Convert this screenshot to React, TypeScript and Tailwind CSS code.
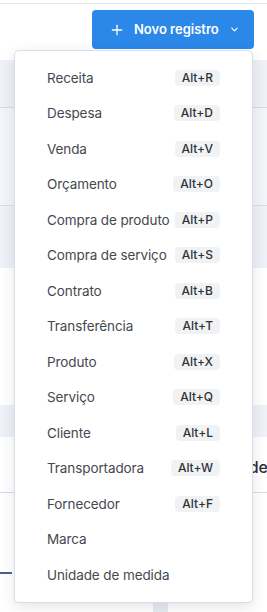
import { ChevronDown, Plus } from "lucide-react";

const shortcuts: { label: string; keys?: string }[] = [
  { label: "Receita", keys: "Alt+R" },
  { label: "Despesa", keys: "Alt+D" },
  { label: "Venda", keys: "Alt+V" },
  { label: "Orçamento", keys: "Alt+O" },
  { label: "Compra de produto", keys: "Alt+P" },
  { label: "Compra de serviço", keys: "Alt+S" },
  { label: "Contrato", keys: "Alt+B" },
  { label: "Transferência", keys: "Alt+T" },
  { label: "Produto", keys: "Alt+X" },
  { label: "Serviço", keys: "Alt+Q" },
  { label: "Cliente", keys: "Alt+L" },
  { label: "Transportadora", keys: "Alt+W" },
  { label: "Fornecedor", keys: "Alt+F" },
  { label: "Marca" },
  { label: "Unidade de medida" },
];

function NewRecordMenu() {
  return (
    <div className="absolute left-[14px] top-[50px] w-[239px] rounded-[5px] border border-[#d9dee6] bg-white py-[9px] shadow-[0_4px_14px_rgba(30,45,70,0.12)]">
      <ul>
        {shortcuts.map(({ label, keys }) => (
          <li
            key={label}
            className="flex h-[35.5px] items-center justify-between gap-1 px-8"
          >
            <span className="whitespace-nowrap text-[13.5px] tracking-[-0.1px] text-[#45494f]">
              {label}
            </span>
            {keys && (
              <kbd className="rounded-[4px] bg-[#f1f2f4] px-[7px] py-[1px] font-[Inter,sans-serif] text-[12px] font-medium leading-[14px] text-[#2f3237]">
                {keys}
              </kbd>
            )}
          </li>
        ))}
      </ul>
    </div>
  );
}

export default function App() {
  return (
    <div className="relative h-[612px] w-[267px] overflow-hidden bg-white font-[Inter,sans-serif]">
      <div className="h-[3px]" />
      <header className="flex h-[57px] justify-end border-t border-[#e6e8ec] pr-[13px] pt-[6px]">
        <button className="flex h-[39px] w-[162px] items-center rounded-[4px] bg-[#2b87e8] pl-[17px] text-[13px] font-semibold text-white">
          <Plus className="h-[16px] w-[16px]" strokeWidth={2} />
          <span className="ml-[9px]">Novo registro</span>
          <ChevronDown className="ml-[10px] h-[11px] w-[11px]" strokeWidth={2.4} />
        </button>
      </header>

      <div className="h-[48px] border-b border-[#d6dae0] bg-[#eef1f6]" />
      <div className="h-[98px] border-b border-[#d9dde3] bg-[#f3f5f9]" />
      <div className="h-[62px] bg-[#eef1f6]" />
      <div className="h-[137px] bg-white" />
      <div className="h-[32px] bg-[#eef1f6]" />
      <div className="flex h-[56px] items-center justify-end border-b border-[#d9dde3] pt-[4px]">
        <span className="-mr-[1px] text-[16px] font-medium text-[#2c2f34]">
          de
        </span>
      </div>
      <div className="flex h-[81px] items-end">
        <div className="h-[2px] w-[12px] bg-[#46648a]" />
      </div>
      <div className="ml-[153px] mt-[26px] h-[14px] w-[15px] bg-[#e8ebf0]" />

      <NewRecordMenu />
    </div>
  );
}
